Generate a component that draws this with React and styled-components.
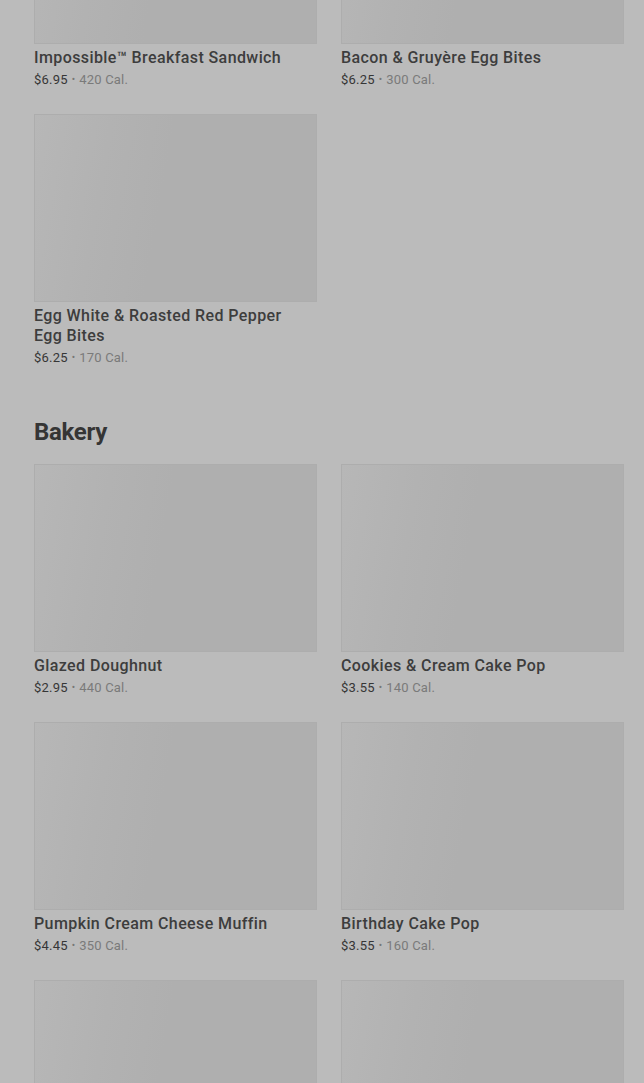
import React from "react"
import styled, { createGlobalStyle } from "styled-components"

const GlobalStyle = createGlobalStyle`
  html, body {
    margin: 0;
    padding: 0;
    background: #bbbbbb;
    overflow: hidden;
  }
  body {
    font-family: Roboto, "Liberation Sans", Arial, sans-serif;
    -webkit-font-smoothing: antialiased;
  }
`

const sections = [
  {
    title: null,
    items: [
      { name: "Impossible™ Breakfast Sandwich", price: "$6.95", cal: "420 Cal." },
      { name: "Bacon & Gruyère Egg Bites", price: "$6.25", cal: "300 Cal." },
      { name: "Egg White & Roasted Red Pepper Egg Bites", price: "$6.25", cal: "170 Cal." },
    ],
  },
  {
    title: "Bakery",
    items: [
      { name: "Glazed Doughnut", price: "$2.95", cal: "440 Cal." },
      { name: "Cookies & Cream Cake Pop", price: "$3.55", cal: "140 Cal." },
      { name: "Pumpkin Cream Cheese Muffin", price: "$4.45", cal: "350 Cal." },
      { name: "Birthday Cake Pop", price: "$3.55", cal: "160 Cal." },
      { name: "Butter Croissant", price: "$3.75", cal: "260 Cal." },
      { name: "Chocolate Croissant", price: "$4.25", cal: "300 Cal." },
    ],
  },
]

export default function App() {
  return (
    <>
      <GlobalStyle />
      <Page>
        {sections.map((section, i) => (
          <Section key={i}>
            {section.title && <SectionTitle>{section.title}</SectionTitle>}
            <Grid>
              {section.items.map((item) => (
                <Card key={item.name}>
                  <Thumb />
                  <ItemName>{item.name}</ItemName>
                  <Meta>
                    <Price>{item.price}</Price>
                    <Dot>•</Dot>
                    <Cal>{item.cal}</Cal>
                  </Meta>
                </Card>
              ))}
            </Grid>
          </Section>
        ))}
      </Page>
    </>
  )
}

const Page = styled.div`
  margin-top: -144px;
  padding: 0 20px 0 34px;
  display: flex;
  flex-direction: column;
  gap: 48px;
`

const Section = styled.section`
  display: flex;
  flex-direction: column;
`

const SectionTitle = styled.h2`
  margin: 0 0 16px;
  font-size: 24px;
  line-height: 32px;
  font-weight: 700;
  color: #353535;
  letter-spacing: -0.3px;
`

const Grid = styled.div`
  display: grid;
  grid-template-columns: 1fr 1fr;
  column-gap: 24px;
  row-gap: 24px;
`

const Card = styled.div`
  display: flex;
  flex-direction: column;
`

const Thumb = styled.div`
  height: 188px;
  background: linear-gradient(100deg, #b7b7b7 0%, #b2b2b2 25%, #afafaf 45%, #afafaf 100%);
  box-shadow: inset 0 0 0 1px #adadad;
  margin-bottom: 4px;
`

const ItemName = styled.div`
  padding-right: 8px;
  font-size: 16px;
  line-height: 20px;
  font-weight: 500;
  color: #3d3d3d;
  letter-spacing: 0.4px;
`

const Meta = styled.div`
  margin-top: 2px;
  display: flex;
  align-items: center;
  gap: 4px;
  font-size: 13px;
  line-height: 20px;
  letter-spacing: 0.2px;
`

const Price = styled.span`
  color: #363636;
`

const Dot = styled.span`
  color: #777777;
  font-size: 10px;
`

const Cal = styled.span`
  color: #7a7a7a;
`
